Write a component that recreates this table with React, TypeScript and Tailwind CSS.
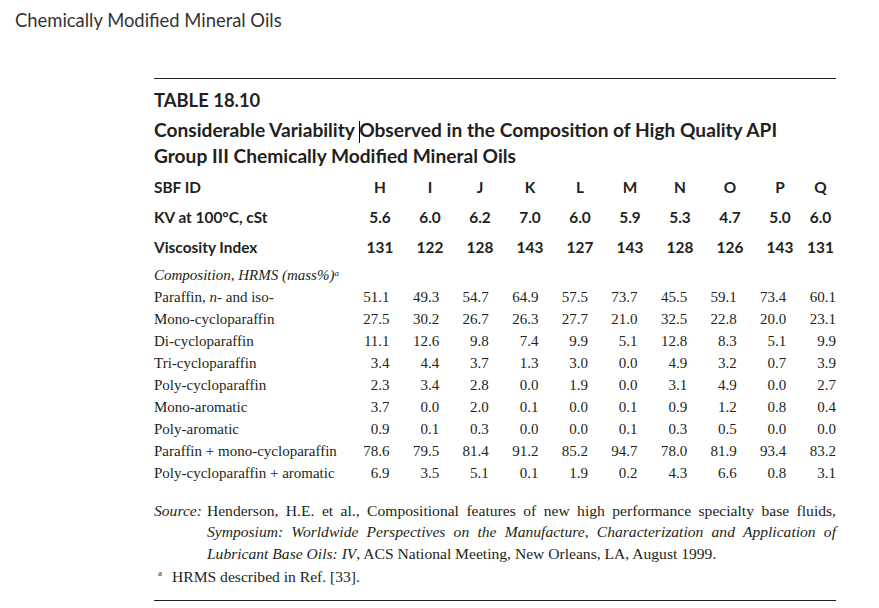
import React from 'react';

const sans = { fontFamily: 'Lato, "Open Sans", sans-serif' };
const serif = { fontFamily: '"Liberation Serif", "Times New Roman", serif' };

const ids = ['H', 'I', 'J', 'K', 'L', 'M', 'N', 'O', 'P', 'Q'];
const kv = ['5.6', '6.0', '6.2', '7.0', '6.0', '5.9', '5.3', '4.7', '5.0', '6.0'];
const vi = ['131', '122', '128', '143', '127', '143', '128', '126', '143', '131'];

const rows: { label: React.ReactNode; values: string[] }[] = [
  { label: <>Paraffin, <i>n</i>- and iso-</>, values: ['51.1', '49.3', '54.7', '64.9', '57.5', '73.7', '45.5', '59.1', '73.4', '60.1'] },
  { label: 'Mono-cycloparaffin', values: ['27.5', '30.2', '26.7', '26.3', '27.7', '21.0', '32.5', '22.8', '20.0', '23.1'] },
  { label: 'Di-cycloparaffin', values: ['11.1', '12.6', '9.8', '7.4', '9.9', '5.1', '12.8', '8.3', '5.1', '9.9'] },
  { label: 'Tri-cycloparaffin', values: ['3.4', '4.4', '3.7', '1.3', '3.0', '0.0', '4.9', '3.2', '0.7', '3.9'] },
  { label: 'Poly-cycloparaffin', values: ['2.3', '3.4', '2.8', '0.0', '1.9', '0.0', '3.1', '4.9', '0.0', '2.7'] },
  { label: 'Mono-aromatic', values: ['3.7', '0.0', '2.0', '0.1', '0.0', '0.1', '0.9', '1.2', '0.8', '0.4'] },
  { label: 'Poly-aromatic', values: ['0.9', '0.1', '0.3', '0.0', '0.0', '0.1', '0.3', '0.5', '0.0', '0.0'] },
  { label: 'Paraffin + mono-cycloparaffin', values: ['78.6', '79.5', '81.4', '91.2', '85.2', '94.7', '78.0', '81.9', '93.4', '83.2'] },
  { label: 'Poly-cycloparaffin + aromatic', values: ['6.9', '3.5', '5.1', '0.1', '1.9', '0.2', '4.3', '6.6', '0.8', '3.1'] },
];

const BoldRow = ({ label, values }: { label: string; values: string[] }) => (
  <div className="grid grid-cols-[201px_repeat(9,50px)_31px] h-[30px] items-center text-[15.4px] font-bold text-[#231f20]" style={sans}>
    <div>{label}</div>
    {values.map((v, i) => (
      <div key={i} className="text-center">{v}</div>
    ))}
  </div>
);

const App = () => {
  return (
    <div className="w-[879px] h-[608px] bg-white overflow-hidden text-[#231f20]">
      <div className="pl-[15px] pt-[9px] h-[31px] leading-[22px] text-[18.4px] text-[#333]" style={sans}>
        Chemically Modified Mineral Oils
      </div>

      <div className="ml-[154px] w-[682px]">
        <div className="mt-[47px] border-t border-[#231f20]" />

        <div className="mt-[8px] h-[26px] leading-[26px] text-[18.4px] font-bold" style={sans}>TABLE 18.10</div>
        <div className="mt-[4px] leading-[26px] text-[19.15px] font-bold whitespace-nowrap" style={sans}>
          <div>
            Considerable Variability <span className="inline-block w-px h-[22px] bg-black align-middle -mr-px" />Observed in the Composition of High Quality API
          </div>
          <div>Group III Chemically Modified Mineral Oils</div>
        </div>

        <div className="mt-[3px]">
          <BoldRow label="SBF ID" values={ids} />
          <BoldRow label="KV at 100°C, cSt" values={kv} />
          <BoldRow label="Viscosity Index" values={vi} />
        </div>

        <div className="mt-[2px] text-[15px]" style={serif}>
          <div className="h-[22px] leading-[22px] italic">
            Composition, HRMS (mass%)<sup className="text-[9px]">a</sup>
          </div>
          {rows.map((r, i) => (
            <div key={i} className="grid grid-cols-[186px_repeat(10,49.6px)] h-[22px] leading-[22px]">
              <div className="whitespace-nowrap">{r.label}</div>
              {r.values.map((v, j) => (
                <div key={j} className="text-right">{v}</div>
              ))}
            </div>
          ))}
        </div>

        <div className="mt-[16px] text-[15.6px] leading-[21.3px]" style={serif}>
          <div className="flex gap-[5px]">
            <div className="shrink-0 italic whitespace-nowrap">Source:</div>
            <div className="flex-1 min-w-0">
              <div className="whitespace-nowrap [text-align-last:justify]">Henderson, H.E. et al., Compositional features of new high performance specialty base fluids,</div>
              <div className="italic whitespace-nowrap [text-align-last:justify]">Symposium: Worldwide Perspectives on the Manufacture, Characterization and Application of</div>
              <div className="whitespace-nowrap"><i>Lubricant Base Oils: IV</i>, ACS National Meeting, New Orleans, LA, August 1999.</div>
            </div>
          </div>
          <div className="mt-[2px] flex">
            <div className="w-[18px] pl-[4px] text-[9px] leading-[14px]">a</div>
            <div>HRMS described in Ref. [33].</div>
          </div>
        </div>

        <div className="mt-[13px] border-t border-[#231f20]" />
      </div>
    </div>
  );
};

export default App;
